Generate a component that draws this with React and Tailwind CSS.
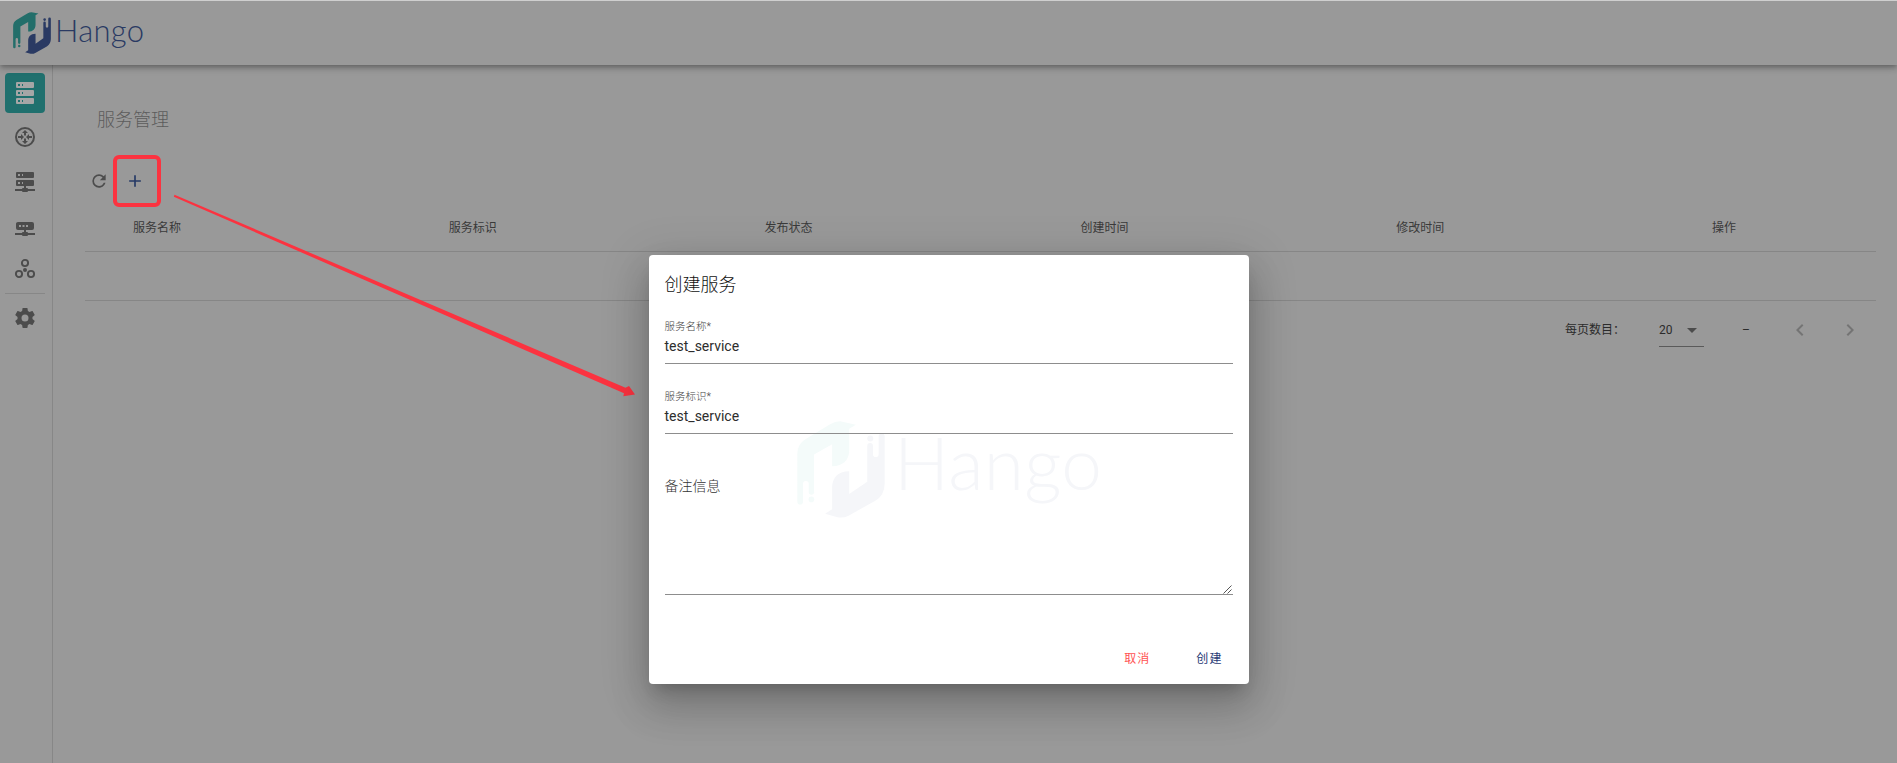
import React from "react";

const ICONS = {
  server:
    "M4,1H20A1,1 0 0,1 21,2V6A1,1 0 0,1 20,7H4A1,1 0 0,1 3,6V2A1,1 0 0,1 4,1M4,9H20A1,1 0 0,1 21,10V14A1,1 0 0,1 20,15H4A1,1 0 0,1 3,14V10A1,1 0 0,1 4,9M4,17H20A1,1 0 0,1 21,18V22A1,1 0 0,1 20,23H4A1,1 0 0,1 3,22V18A1,1 0 0,1 4,17M9,5H10V3H9V5M9,13H10V11H9V13M9,21H10V19H9V21M5,3V5H7V3H5M5,11V13H7V11H5M5,19V21H7V19H5Z",
  router:
    "M12,2A10,10 0 0,0 2,12A10,10 0 0,0 12,22A10,10 0 0,0 22,12A10,10 0 0,0 12,2M12,4A8,8 0 0,1 20,12A8,8 0 0,1 12,20A8,8 0 0,1 4,12A8,8 0 0,1 12,4M12,5L9,8H11V10.6H13V8H15L12,5M12,19L15,16H13V13.4H11V16H9L12,19M11,12L8,9V11H5V13H8V15L11,12M13,12L16,15V13H19V11H16V9L13,12Z",
  serverNetwork:
    "M13,19H14A1,1 0 0,1 15,20H22V22H15A1,1 0 0,1 14,23H10A1,1 0 0,1 9,22H2V20H9A1,1 0 0,1 10,19H11V17H4A1,1 0 0,1 3,16V12A1,1 0 0,1 4,11H20A1,1 0 0,1 21,12V16A1,1 0 0,1 20,17H13V19M4,3H20A1,1 0 0,1 21,4V8A1,1 0 0,1 20,9H4A1,1 0 0,1 3,8V4A1,1 0 0,1 4,3M9,7H10V5H9V7M9,15H10V13H9V15M5,5V7H7V5H5M5,13V15H7V13H5Z",
  routerNetwork:
    "M5,9C3.89,9 3,9.9 3,11V15A2,2 0 0,0 5,17H11V19H10A1,1 0 0,0 9,20H2V22H9A1,1 0 0,0 10,23H14A1,1 0 0,0 15,22H22V20H15A1,1 0 0,0 14,19H13V17H19A2,2 0 0,0 21,15V11A2,2 0 0,0 19,9H5M6,12H8V14H6V12M9.5,12H11.5V14H9.5V12M13,12H15V14H13V12Z",
  cog:
    "M12,15.5A3.5,3.5 0 0,1 8.5,12A3.5,3.5 0 0,1 12,8.5A3.5,3.5 0 0,1 15.5,12A3.5,3.5 0 0,1 12,15.5M19.43,12.97C19.47,12.65 19.5,12.33 19.5,12C19.5,11.67 19.47,11.34 19.43,11L21.54,9.37C21.73,9.22 21.78,8.95 21.66,8.73L19.66,5.27C19.54,5.05 19.27,4.96 19.05,5.05L16.56,6.05C16.04,5.66 15.5,5.32 14.87,5.07L14.5,2.42C14.46,2.18 14.25,2 14,2H10C9.75,2 9.54,2.18 9.5,2.42L9.13,5.07C8.5,5.32 7.96,5.66 7.44,6.05L4.95,5.05C4.73,4.96 4.46,5.05 4.34,5.27L2.34,8.73C2.21,8.95 2.27,9.22 2.46,9.37L4.57,11C4.53,11.34 4.5,11.67 4.5,12C4.5,12.33 4.53,12.65 4.57,12.97L2.46,14.63C2.27,14.78 2.21,15.05 2.34,15.27L4.34,18.73C4.46,18.95 4.73,19.03 4.95,18.95L7.44,17.94C7.96,18.34 8.5,18.68 9.13,18.93L9.5,21.58C9.54,21.82 9.75,22 10,22H14C14.25,22 14.46,21.82 14.5,21.58L14.87,18.93C15.5,18.67 16.04,18.34 16.56,17.94L19.05,18.95C19.27,19.03 19.54,18.95 19.66,18.73L21.66,15.27C21.78,15.05 21.73,14.78 21.54,14.63L19.43,12.97Z",
  refresh:
    "M17.65,6.35C16.2,4.9 14.21,4 12,4A8,8 0 0,0 4,12A8,8 0 0,0 12,20C15.73,20 18.84,17.45 19.73,14H17.65C16.83,16.33 14.61,18 12,18A6,6 0 0,1 6,12A6,6 0 0,1 12,6C13.66,6 15.14,6.69 16.22,7.78L13,11H20V4L17.65,6.35Z",
  plus: "M19,13H13V19H11V13H5V11H11V5H13V11H19V13Z",
  caret: "M7,10L12,15L17,10H7Z",
  left: "M15.41,16.58L10.83,12L15.41,7.41L14,6L8,12L14,18L15.41,16.58Z",
  right: "M8.59,16.58L13.17,12L8.59,7.41L10,6L16,12L10,18L8.59,16.58Z",
};

function Icon({ name, className }) {
  return (
    <svg viewBox="0 0 24 24" className={`shrink-0 ${className}`} fill="currentColor" fillRule="evenodd">
      <path d={ICONS[name]} />
    </svg>
  );
}

function HubIcon() {
  return (
    <svg viewBox="0 0 24 24" className="size-6 shrink-0" fill="none" stroke="currentColor" strokeWidth="1.9">
      <circle cx="12" cy="6" r="3.1" />
      <circle cx="6" cy="17" r="3.1" />
      <circle cx="18" cy="17" r="3.1" />
      <circle cx="12" cy="13" r="2" fill="currentColor" stroke="none" />
    </svg>
  );
}

function Mark({ className, teal, navy }) {
  return (
    <svg viewBox="51 62 263 292" preserveAspectRatio="none" className={`shrink-0 ${className}`}>
      <g fill={teal}>
        <path d="M180 63 L227 73 L207 85 V150 C207 178 190 198 156 198 V132 L102 163 V276 A7.5 7.5 0 0 1 86 276 V251 A8.500 8.500 0 0 0 69 251 V305 A8.500 8.500 0 0 1 52 305 V160 Q52 133 75 118 L150 72 Q165 63 180 63 Z" />
        <circle cx="94" cy="298" r="8.500" />
      </g>
      <g fill={navy}>
        <path d="M207 213 V282 L261 245 V137 A8.500 8.500 0 0 1 278 137 V162 A8.500 8.500 0 0 0 295 162 V109 A9 9 0 0 1 313 109 V250 Q313 285 285 302 L205 347 Q190 355 172 352 L135 341 L156 328 V262 C156 235 172 213 207 213 Z" />
        <circle cx="270" cy="115" r="9" />
      </g>
    </svg>
  );
}

function Field({ label, value }) {
  return (
    <label className="flex h-[50px] flex-col border-b border-[#8d8d8d]">
      <span className="mt-[5px] h-4 text-[10.5px] leading-4 font-light text-[#444]">{label}</span>
      <span className="mt-px h-5 text-sm leading-5 text-[#2d2d2d]">{value}</span>
    </label>
  );
}

const COLUMNS = ["服务名称", "服务标识", "发布状态", "创建时间", "修改时间", "操作"];

export default function App() {
  return (
    <div className="relative flex h-[763px] w-[1897px] flex-col overflow-hidden bg-[#999] font-['Roboto','Noto_Sans_CJK_SC',sans-serif]">
      <header className="z-10 flex h-[65px] shrink-0 items-start border-t border-[#cfcfcf] bg-[#999] shadow-[0_2px_4px_-1px_rgba(0,0,0,0.2),0_4px_5px_0_rgba(0,0,0,0.14),0_1px_10px_0_rgba(0,0,0,0.12)]">
        <Mark className="mt-[11px] ml-[13px] h-[42px] w-[38px]" teal="#236e6a" navy="#2a3a63" />
        <svg className="mt-[7px] ml-[5px] h-12 w-[92px]" viewBox="0 0 92 48">
          <text x="-1" y="34" textLength="89" className="font-['Lato'] text-[31px] font-light" fill="#2a3a63">Hango</text>
        </svg>
      </header>

      <div className="flex min-h-0 flex-1">
        <nav className="flex w-[53px] shrink-0 flex-col border-r border-[#878787] px-[5px] pt-2 text-[#4c4c4c]">
          <div className="flex flex-col gap-1">
            <div className="flex size-10 items-center justify-center rounded bg-[#20706e] text-[#a6a6a6]">
              <Icon name="server" className="size-6" />
            </div>
            <div className="flex size-10 items-center justify-center"><Icon name="router" className="size-6" /></div>
            <div className="flex size-10 items-center justify-center"><Icon name="serverNetwork" className="size-6" /></div>
            <div className="flex size-10 items-center justify-center"><Icon name="routerNetwork" className="size-6" /></div>
            <div className="flex size-10 items-center justify-center"><HubIcon /></div>
          </div>
          <div className="mt-1 h-px w-10 bg-[#878787]" />
          <div className="mt-1 flex size-10 items-center justify-center"><Icon name="cog" className="size-6" /></div>
        </nav>

        <main className="flex flex-1 flex-col pr-[21px] pl-8">
          <h1 className="mt-[41px] ml-3 h-7 text-lg leading-7 font-light text-[#5c5c5c]">服务管理</h1>
          <div className="mt-[35px] flex h-6 items-center">
            <Icon name="refresh" className="ml-1 size-5 text-[#4c4c4c]" />
            <Icon name="plus" className="ml-4 size-5 text-[#263a66]" />
          </div>
          <div className="mt-[11px] grid h-12 grid-cols-[315.8px_315.8px_315.8px_315.8px_315.8px_1fr] items-center border-b border-[#868686] text-xs text-[#3a3a3a]">
            {COLUMNS.map((c) => <div key={c} className="pl-12">{c}</div>)}
          </div>
          <div className="h-[49px] border-b border-[#868686]" />
          <div className="flex h-[57px] items-center text-xs text-[#2b2b2b]">
            <span className="ml-[1480px] w-[94px]">每页数目：</span>
            <div className="mt-[3px] flex h-8 w-[45px] items-center border-b border-[#5a5a5a] pb-px">
              <span className="-mt-px w-[21px]">20</span>
              <Icon name="caret" className="size-6 text-[#4c4c4c]" />
            </div>
            <span className="ml-[38px] w-[46px]">–</span>
            <Icon name="left" className="size-6 text-[#747474]" />
            <Icon name="right" className="ml-[26px] size-6 text-[#747474]" />
          </div>
        </main>
      </div>

      <svg className="absolute top-0 left-0 h-[763px] w-[1897px]" viewBox="0 0 1897 763">
        <rect x="115" y="157" width="44" height="48" rx="4" fill="none" stroke="#fb3340" strokeWidth="4" />
        <path d="M174.500 194.700 L625.500 387.800 L629 386 L635 394.500 L623.300 396.200 L624 393.300 L173.800 196.700 Z" fill="#fb3340" />
      </svg>

      <div className="absolute inset-0 flex items-start justify-center pt-[255px]">
        <section className="relative flex h-[429px] w-[600px] flex-col rounded bg-white px-4 shadow-[0_11px_15px_-7px_rgba(0,0,0,0.2),0_24px_38px_3px_rgba(0,0,0,0.14),0_9px_46px_8px_rgba(0,0,0,0.12)]">
          <div className="absolute top-[166px] left-[148px] flex">
            <Mark className="h-[97px] w-[88px]" teal="#f4fbfa" navy="#f5f6f9" />
            <svg className="h-[110px] w-[260px] overflow-visible" viewBox="0 0 260 110">
              <text x="9" y="69" textLength="208" className="font-['Lato'] text-[73px] leading-none font-light" fill="#f5f6f9">Hango</text>
            </svg>
          </div>
          <h2 className="relative mt-4 h-7 text-lg leading-7 font-light text-[#111]">创建服务</h2>
          <div className="relative mt-[15px] flex flex-col gap-5">
            <Field label="服务名称*" value="test_service" />
            <Field label="服务标识*" value="test_service" />
          </div>
          <div className="relative mt-[42px] flex h-[119px] items-start justify-between border-b border-[#8d8d8d]">
            <span className="text-sm leading-5 font-light text-[#333]">备注信息</span>
            <svg className="mr-px size-[9px] self-end" viewBox="0 0 9 9" stroke="#555" strokeWidth="1">
              <path d="M0.500 8.500 L8.500 0.500 M4.500 8.500 L8.500 4.500" />
            </svg>
          </div>
          <div className="relative mt-[54px] flex h-5 justify-end gap-[46px] pr-[10px] text-xs leading-5 tracking-[1.07px]">
            <button className="text-[#ff5252]">取消</button>
            <button className="text-[#1f3a75]">创建</button>
          </div>
        </section>
      </div>
    </div>
  );
}
